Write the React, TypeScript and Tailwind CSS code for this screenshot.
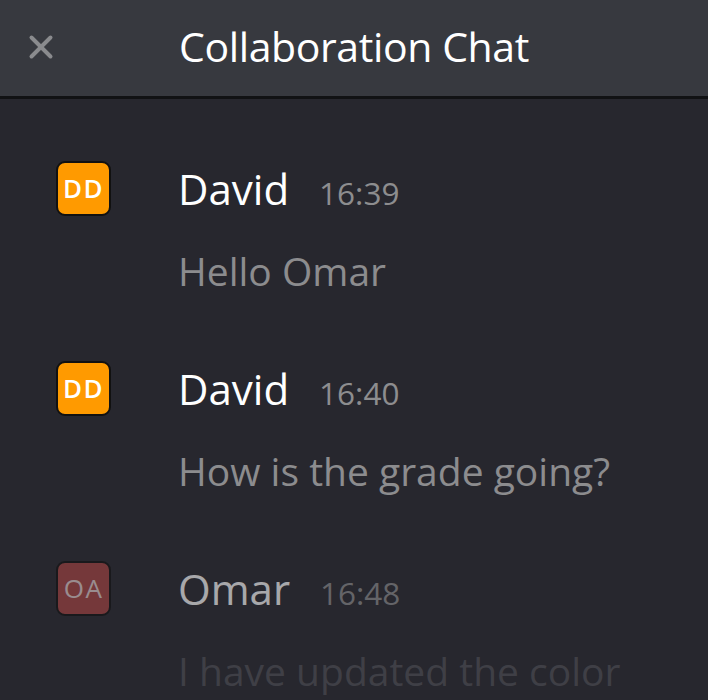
import { X } from "lucide-react"

const messages = [
    { initials: "DD", name: "David", time: "16:39", text: "Hello Omar", color: "bg-[#ff9a00]", faded: false },
    { initials: "DD", name: "David", time: "16:40", text: "How is the grade going?", color: "bg-[#ff9a00]", faded: false },
    { initials: "OA", name: "Omar", time: "16:48", text: "I have updated the color", color: "bg-[#a94442]", faded: true },
]

export default function App() {
    return (
        <div className="w-[708px] h-[700px] overflow-hidden bg-[#27272e] font-['Open_Sans',sans-serif]">
            <header className="relative h-[99px] bg-[#37393f] border-b-[3px] border-[#111214] flex items-center justify-center">
                <button className="absolute left-[22px] top-[28px] text-[#8a8b8e]">
                    <X className="w-[38px] h-[38px]" strokeWidth={2.5} />
                </button>
                <h1 className="text-[41px] text-white tracking-[-0.4px] -mt-[3px]">Collaboration Chat</h1>
            </header>

            <div className="pt-[62px] flex flex-col pl-[56px]">
                {messages.map((m, i) => (
                    <div key={i} className={`h-[200px] shrink-0 flex gap-[67px] ${m.faded ? "opacity-60" : ""}`}>
                        <div
                            className={`${m.color} w-[55px] h-[55px] shrink-0 rounded-[9px] border-2 border-[#111] flex items-center justify-center text-[26px] tracking-[1.5px] ${
                                m.faded ? "text-[#e6d0d0] font-normal" : "text-white font-semibold"
                            }`}
                        >
                            {m.initials}
                        </div>
                        <div className="flex flex-col -mt-[4px]">
                            <div className="flex items-baseline gap-[30px] h-[56px]">
                                <span className="text-[42px] text-white">{m.name}</span>
                                <span className="text-[31.5px] text-[#8d8d8f]">{m.time}</span>
                            </div>
                            <div className={`mt-[30px] text-[39px] leading-[56px] ${m.faded ? "text-[#4f5056]" : "text-[#8c8c8e]"}`}>
                                {m.text}
                            </div>
                        </div>
                    </div>
                ))}
            </div>
        </div>
    )
}
